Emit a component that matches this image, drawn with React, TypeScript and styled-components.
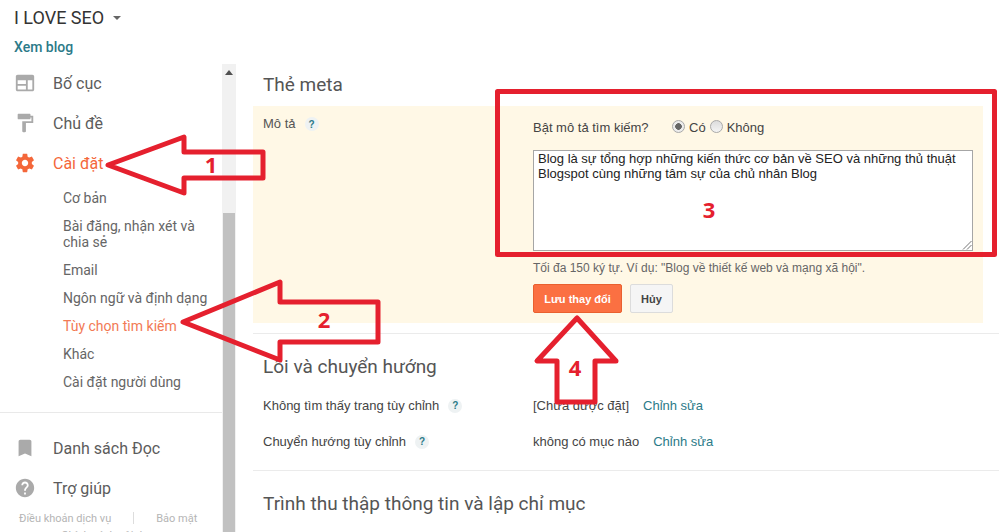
import styled, { createGlobalStyle } from 'styled-components';

const GlobalStyle = createGlobalStyle`
  html, body {
    margin: 0;
    padding: 0;
    height: 532px;
    overflow: hidden;
    background: #fff;
  }
  * { box-sizing: border-box; }
`;

const ORANGE = '#f4673a';
const TEAL = '#2b7a88';
const RED = '#e5202e';

const Page = styled.div`
  position: relative;
  width: 999px;
  height: 532px;
  overflow: hidden;
  font-family: Roboto, 'Liberation Sans', sans-serif;
  color: #555;
`;

const Header = styled.header`
  height: 64px;
  padding: 7px 14px 0;
`;

const BlogName = styled.div`
  display: flex;
  align-items: center;
  gap: 9px;
  height: 21px;
  font-size: 18px;
  color: #333;
`;

const Caret = styled.span`
  width: 0;
  height: 0;
  border-left: 4px solid transparent;
  border-right: 4px solid transparent;
  border-top: 4px solid #666;
`;

const ViewBlog = styled.a`
  display: block;
  margin-top: 10px;
  font-size: 14px;
  font-weight: 500;
  line-height: 18px;
  color: ${TEAL};
`;

const Body = styled.div`
  display: flex;
  height: 468px;
`;

const Sidebar = styled.aside`
  width: 222px;
  flex: none;
  margin-top: -1px;
  overflow: hidden;
`;

const NavItem = styled.div<{ $active?: boolean }>`
  display: flex;
  align-items: center;
  height: 40px;
  padding-left: 14px;
  font-size: 16px;
  color: ${(p) => (p.$active ? ORANGE : '#5c5c5c')};

  svg {
    width: 22px;
    height: 22px;
    margin-right: 17px;
    flex: none;
    fill: ${(p) => (p.$active ? ORANGE : '#aaa')};
  }
`;

const SubList = styled.div`
  padding: 1px 8px 0 63px;
`;

const SubItem = styled.div<{ $active?: boolean; $narrow?: boolean }>`
  padding: 6px 0;
  max-width: ${(p) => (p.$narrow ? '140px' : 'none')};
  font-size: 14px;
  line-height: 16px;
  color: ${(p) => (p.$active ? '#f27a55' : '#666')};
`;

const NavDivider = styled.hr`
  margin: 16px 0 15px;
  border: 0;
  border-top: 1px solid #e9e9e9;
`;

const FooterLinks = styled.div`
  display: flex;
  align-items: center;
  margin-top: 2px;
  padding-left: 19px;
  height: 16px;
  font-size: 11px;
  color: #b5b5b5;
`;

const FooterSeparator = styled.span`
  width: 1px;
  height: 12px;
  margin: 0 22px;
  background: #ddd;
`;

const FooterLast = styled.div`
  margin-top: 3px;
  text-align: center;
  font-size: 11px;
  color: #b5b5b5;
`;

const Scrollbar = styled.div`
  position: relative;
  width: 14px;
  flex: none;
  background: #f1f1f1;
`;

const ScrollUp = styled.span`
  position: absolute;
  top: 6px;
  left: 3px;
  width: 0;
  height: 0;
  border-left: 4px solid transparent;
  border-right: 4px solid transparent;
  border-bottom: 5px solid #505050;
`;

const ScrollThumb = styled.div`
  position: absolute;
  top: 149px;
  left: 1px;
  right: 1px;
  bottom: 0;
  background: #c1c1c1;
`;

const Main = styled.main`
  flex: 1;
  min-width: 0;
  margin-top: -64px;
  padding: 73px 0 0 17px;
  overflow: hidden;
`;

const SectionTitle = styled.h2`
  margin: 0;
  padding-left: 10px;
  font-size: 19px;
  font-weight: 400;
  line-height: 24px;
  color: #555;
`;

const MetaPanel = styled.section`
  display: grid;
  grid-template-columns: 280px 1fr;
  width: 730px;
  height: 217px;
  margin-top: 9px;
  background: #fff8e6;
  font-family: 'Liberation Sans', Arial, sans-serif;
  font-size: 13px;
`;

const FieldLabel = styled.div`
  display: flex;
  align-items: flex-start;
  gap: 9px;
  padding: 10px 0 0 10px;
  line-height: 15px;
  color: #555;
`;

const Help = styled.span`
  display: inline-flex;
  align-items: center;
  justify-content: center;
  width: 14px;
  height: 14px;
  margin-top: 1px;
  border-radius: 50%;
  background: #eef2f3;
  font-family: 'Liberation Sans', Arial, sans-serif;
  font-size: 10px;
  font-weight: 700;
  color: ${TEAL};
`;

const FieldBody = styled.div`
  padding-top: 14px;
`;

const ToggleRow = styled.div`
  display: flex;
  align-items: center;
  height: 15px;
  color: #444;
`;

const ToggleLabel = styled.span`
  width: 139px;
`;

const RadioDot = styled.span<{ $checked?: boolean }>`
  display: inline-block;
  width: 13px;
  height: 13px;
  margin: -3px 4px 0 0;
  border-radius: 50%;
  border: 1px solid #a9a9a9;
  background: ${(p) =>
    p.$checked
      ? 'radial-gradient(circle, #666 0 3px, #ececec 3.6px)'
      : 'linear-gradient(#dcdcdc, #f4f4f4)'};
`;

const RadioText = styled.span`
  margin-right: 4px;
`;

const Description = styled.div`
  position: relative;
  width: 440px;
  height: 101px;
  margin-top: 15px;
  padding: 0 4px;
  border: 1px solid #a6a6a6;
  background: #fff;
  font-size: 13px;
  line-height: 15px;
  color: #222;
`;

const Resizer = styled.svg`
  position: absolute;
  right: 0;
  bottom: 0;
  width: 11px;
  height: 11px;
  stroke: #777;
  stroke-width: 1;
`;

const Hint = styled.div`
  margin-top: 10px;
  font-size: 12px;
  line-height: 14px;
  color: #666;
`;

const Actions = styled.div`
  display: flex;
  gap: 8px;
  margin-top: 9px;
`;

const Button = styled.button<{ $primary?: boolean }>`
  height: 29px;
  padding: 0;
  width: ${(p) => (p.$primary ? '89px' : '43px')};
  border-radius: 2px;
  border: 1px solid ${(p) => (p.$primary ? '#e9602f' : '#dcdcdc')};
  background: ${(p) => (p.$primary ? '#fb7042' : '#f5f5f5')};
  color: ${(p) => (p.$primary ? '#fff' : '#444')};
  font-family: 'Liberation Sans', Arial, sans-serif;
  font-size: 11px;
  font-weight: 700;
`;

const Section = styled.section`
  width: 746px;
  margin-top: 10px;
  border-top: 1px solid #ebebeb;
  padding-top: 21px;
`;

const LastSection = styled(Section)`
  margin-top: 0;
`;

const SettingRows = styled.div`
  margin-top: 8px;
  padding-bottom: 11px;
  font-family: 'Liberation Sans', Arial, sans-serif;
  font-size: 13px;
`;

const SettingRow = styled.div`
  display: grid;
  grid-template-columns: 270px 1fr;
  align-items: center;
  height: 36px;
  padding-left: 10px;
  color: #444;
`;

const SettingName = styled.div`
  display: flex;
  align-items: center;
  gap: 9px;
`;

const Edit = styled.a`
  margin-left: 14px;
  color: ${TEAL};
`;

const Overlay = styled.svg`
  position: absolute;
  inset: 0;
  width: 999px;
  height: 532px;
  pointer-events: none;
  fill: none;
  stroke: ${RED};
  stroke-width: 5;
  stroke-linejoin: round;
`;

const Mark = styled.span<{ $x: number; $y: number }>`
  position: absolute;
  left: ${(p) => p.$x}px;
  top: ${(p) => p.$y}px;
  transform: translate(-50%, -50%);
  font-family: 'Open Sans', sans-serif;
  font-size: 22px;
  font-weight: 700;
  line-height: 1;
  color: ${RED};
`;

const icons = {
  layout:
    'M20 3H4c-1.1 0-2 .9-2 2v14c0 1.1.9 2 2 2h16c1.1 0 2-.9 2-2V5c0-1.1-.9-2-2-2zM4 9h9v4H4V9zm0 10v-4h9v4H4zm16 0h-5V9h5v10z',
  paint:
    'M18 4V3c0-.55-.45-1-1-1H5c-.55 0-1 .45-1 1v4c0 .55.45 1 1 1h12c.55 0 1-.45 1-1V6h1v4H9v11c0 .55.45 1 1 1h2c.55 0 1-.45 1-1v-9h8V4h-3z',
  gear:
    'M19.43 12.98c.04-.32.07-.64.07-.98s-.03-.66-.07-.98l2.11-1.65c.19-.15.24-.42.12-.64l-2-3.46c-.12-.22-.39-.3-.61-.22l-2.49 1c-.52-.4-1.08-.73-1.69-.98l-.38-2.65C14.46 2.18 14.25 2 14 2h-4c-.25 0-.46.18-.49.42l-.38 2.65c-.61.25-1.17.59-1.69.98l-2.49-1c-.23-.09-.49 0-.61.22l-2 3.46c-.13.22-.07.49.12.64l2.11 1.65c-.04.32-.07.65-.07.98s.03.66.07.98l-2.11 1.65c-.19.15-.24.42-.12.64l2 3.46c.12.22.39.3.61.22l2.49-1c.52.4 1.08.73 1.69.98l.38 2.65c.03.24.24.42.49.42h4c.25 0 .46-.18.49-.42l.38-2.65c.61-.25 1.17-.59 1.69-.98l2.49 1c.23.09.49 0 .61-.22l2-3.46c.12-.22.07-.49-.12-.64l-2.11-1.65zM12 15.5c-1.93 0-3.5-1.57-3.5-3.5s1.57-3.5 3.5-3.5 3.5 1.57 3.5 3.5-1.57 3.5-3.5 3.5z',
  bookmark: 'M17 3H7c-1.1 0-1.99.9-1.99 2L5 21l7-3 7 3V5c0-1.1-.9-2-2-2z',
  help:
    'M12 2C6.48 2 2 6.48 2 12s4.48 10 10 10 10-4.48 10-10S17.52 2 12 2zm1 17h-2v-2h2v2zm2.07-7.75l-.9.92C13.45 12.9 13 13.5 13 15h-2v-.5c0-1.1.45-2.1 1.17-2.83l1.24-1.26c.37-.36.59-.86.59-1.41 0-1.1-.9-2-2-2s-2 .9-2 2H8c0-2.21 1.79-4 4-4s4 1.79 4 4c0 .88-.36 1.68-.93 2.25z',
};

const Icon = ({ d }: { d: string }) => (
  <svg viewBox="0 0 24 24">
    <path d={d} />
  </svg>
);

const App = () => {
  return (
    <Page>
      <GlobalStyle />
      <Header>
        <BlogName>
          I LOVE SEO <Caret />
        </BlogName>
        <ViewBlog>Xem blog</ViewBlog>
      </Header>
      <Body>
        <Sidebar>
          <NavItem>
            <Icon d={icons.layout} />
            Bố cục
          </NavItem>
          <NavItem>
            <Icon d={icons.paint} />
            Chủ đề
          </NavItem>
          <NavItem $active>
            <Icon d={icons.gear} />
            Cài đặt
          </NavItem>
          <SubList>
            <SubItem>Cơ bản</SubItem>
            <SubItem $narrow>Bài đăng, nhận xét và chia sẻ</SubItem>
            <SubItem>Email</SubItem>
            <SubItem>Ngôn ngữ và định dạng</SubItem>
            <SubItem $active>Tùy chọn tìm kiếm</SubItem>
            <SubItem>Khác</SubItem>
            <SubItem>Cài đặt người dùng</SubItem>
          </SubList>
          <NavDivider />
          <NavItem>
            <Icon d={icons.bookmark} />
            Danh sách Đọc
          </NavItem>
          <NavItem>
            <Icon d={icons.help} />
            Trợ giúp
          </NavItem>
          <FooterLinks>
            Điều khoản dịch vụ
            <FooterSeparator />
            Bảo mật
          </FooterLinks>
          <FooterLast>Chính sách nội dung</FooterLast>
        </Sidebar>
        <Scrollbar>
          <ScrollUp />
          <ScrollThumb />
        </Scrollbar>
        <Main>
          <SectionTitle>Thẻ meta</SectionTitle>
          <MetaPanel>
            <FieldLabel>
              Mô tả <Help>?</Help>
            </FieldLabel>
            <FieldBody>
              <ToggleRow>
                <ToggleLabel>Bật mô tả tìm kiếm?</ToggleLabel>
                <RadioDot $checked />
                <RadioText>Có</RadioText>
                <RadioDot />
                <RadioText>Không</RadioText>
              </ToggleRow>
              <Description>
                Blog là sự tổng hợp những kiến thức cơ bản về SEO và những thủ thuật Blogspot cùng
                những tâm sự của chủ nhân Blog
                <Resizer viewBox="0 0 11 11">
                  <path d="M2 10.5 10.5 2M6 10.5 10.5 6" />
                </Resizer>
              </Description>
              <Hint>Tối đa 150 ký tự. Ví dụ: "Blog về thiết kế web và mạng xã hội".</Hint>
              <Actions>
                <Button $primary>Lưu thay đổi</Button>
                <Button>Hủy</Button>
              </Actions>
            </FieldBody>
          </MetaPanel>
          <Section>
            <SectionTitle>Lỗi và chuyển hướng</SectionTitle>
            <SettingRows>
              <SettingRow>
                <SettingName>
                  Không tìm thấy trang tùy chỉnh <Help>?</Help>
                </SettingName>
                <div>
                  [Chưa được đặt]<Edit>Chỉnh sửa</Edit>
                </div>
              </SettingRow>
              <SettingRow>
                <SettingName>
                  Chuyển hướng tùy chỉnh <Help>?</Help>
                </SettingName>
                <div>
                  không có mục nào<Edit>Chỉnh sửa</Edit>
                </div>
              </SettingRow>
            </SettingRows>
          </Section>
          <LastSection>
            <SectionTitle>Trình thu thập thông tin và lập chỉ mục</SectionTitle>
          </LastSection>
        </Main>
      </Body>

      <Overlay viewBox="0 0 999 532">
        <path d="M108 165 184 137V152H263V178H184V193Z" />
        <path d="M183 322 280 282V302H378V342H280V360Z" />
        <rect x="497.5" y="91.5" width="497" height="163" />
        <path d="M577 318 537 361H557V402H595V361H616Z" />
      </Overlay>
      <Mark $x={211} $y={164}>1</Mark>
      <Mark $x={324} $y={319}>2</Mark>
      <Mark $x={709} $y={209}>3</Mark>
      <Mark $x={575} $y={367}>4</Mark>
    </Page>
  );
};

export default App;
